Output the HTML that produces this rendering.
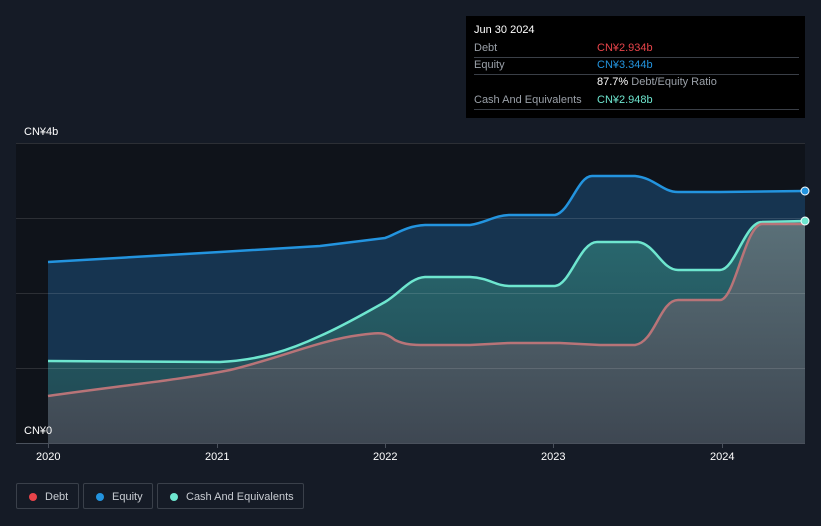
<!DOCTYPE html>
<html><head><meta charset="utf-8"><style>
body{margin:0;width:821px;height:526px;background:#151b26;font-family:"Liberation Sans","Noto Sans CJK SC",sans-serif;overflow:hidden;position:relative}
.tt{position:absolute;left:466px;top:16px;width:339px;height:102px;background:#000;color:#fff;font-size:11px}
.tt .r{position:absolute;left:8px;right:6px;border-bottom:1px solid #3a3f47;height:17px;line-height:17px}
.g{color:#9aa0a8}
.v{position:absolute;left:123px}
.lg{position:absolute;top:483px;height:26px;border:1px solid #3a404a;border-radius:2px;color:#c8ccd2;font-size:11px;line-height:26px;box-sizing:border-box}
.lg i{position:absolute;left:12px;top:9px;width:8px;height:8px;border-radius:50%}
.ax{position:absolute;color:#fff;font-size:11px}
</style></head><body>
<svg width="821" height="526" style="position:absolute;left:0;top:0">
<defs>
<linearGradient id="dg" x1="0" y1="0" x2="0" y2="1"><stop offset="0" stop-color="#5a7078"/><stop offset="1" stop-color="#3e4752"/></linearGradient>
<linearGradient id="cg" x1="0" y1="0" x2="0" y2="1"><stop offset="0" stop-color="#2a6a70"/><stop offset="1" stop-color="#1f4550"/></linearGradient>
</defs>
<rect x="16" y="143" width="789" height="300" fill="#0f131a"/>
<path d="M48,262 L220,252 L320,246 L385,238 C395,235 405,226 425,225 L470,225 C485,223 495,215 510,215 L555,215 C570,212 578,176 592,176 L635,176 C655,178 662,192 678,192 L720,192 L805,191 L805,443 L48,443Z" fill="#163450"/>
<path d="M48,361 L220,362 C260,360 290,350 320,336 C345,325 365,313 385,302 C400,293 410,278 425,277 L470,277 C490,278 495,286 510,286 L555,286 C570,285 580,242 597,242 L638,242 C655,244 662,270 678,270 L720,270 C735,270 745,222 762,222 L805,221 L805,443 L48,443Z" fill="url(#cg)"/>
<path d="M48,396 C110,387 180,380 230,370 C280,358 320,340 360,335 C380,332 385,332 395,340 C405,345 415,345 425,345 L470,345 L510,343 L560,343 L600,345 L635,345 C655,342 660,300 678,300 L720,300 C735,300 745,225 762,224 L805,224 L805,443 L48,443Z" fill="url(#dg)"/>
<g stroke="#ffffff" stroke-opacity="0.12" stroke-width="1"><line x1="16" y1="143.5" x2="805" y2="143.5"/><line x1="16" y1="218.5" x2="805" y2="218.5"/><line x1="16" y1="293.5" x2="805" y2="293.5"/><line x1="16" y1="368.5" x2="805" y2="368.5"/></g>
<line x1="16" y1="443.5" x2="805" y2="443.5" stroke="#4a515c"/>
<path d="M48,262 L220,252 L320,246 L385,238 C395,235 405,226 425,225 L470,225 C485,223 495,215 510,215 L555,215 C570,212 578,176 592,176 L635,176 C655,178 662,192 678,192 L720,192 L805,191" fill="none" stroke="#2394df" stroke-width="2.5"/>
<path d="M48,361 L220,362 C260,360 290,350 320,336 C345,325 365,313 385,302 C400,293 410,278 425,277 L470,277 C490,278 495,286 510,286 L555,286 C570,285 580,242 597,242 L638,242 C655,244 662,270 678,270 L720,270 C735,270 745,222 762,222 L805,221" fill="none" stroke="#6ee6cf" stroke-width="2.5"/>
<path d="M48,396 C110,387 180,380 230,370 C280,358 320,340 360,335 C380,332 385,332 395,340 C405,345 415,345 425,345 L470,345 L510,343 L560,343 L600,345 L635,345 C655,342 660,300 678,300 L720,300 C735,300 745,225 762,224 L805,224" fill="none" stroke="#b87478" stroke-width="2.5"/>
<circle cx="805" cy="191" r="4" fill="#2394df" stroke="#fff" stroke-width="1"/>
<circle cx="805" cy="221" r="4" fill="#6ee6cf" stroke="#fff" stroke-width="1"/>
<g stroke="#4a515c"><line x1="48.5" y1="443" x2="48.5" y2="448"/><line x1="217.5" y1="443" x2="217.5" y2="448"/><line x1="385.5" y1="443" x2="385.5" y2="448"/><line x1="553.5" y1="443" x2="553.5" y2="448"/><line x1="722.5" y1="443" x2="722.5" y2="448"/></g>
</svg>
<div class="ax" style="left:24px;top:126px">CN¥4b</div>
<div class="ax" style="left:24px;top:425px">CN¥0</div>
<div class="ax" style="left:36px;top:451px">2020</div>
<div class="ax" style="left:205px;top:451px">2021</div>
<div class="ax" style="left:373px;top:451px">2022</div>
<div class="ax" style="left:541px;top:451px">2023</div>
<div class="ax" style="left:710px;top:451px">2024</div>
<div class="tt">
<div style="position:absolute;left:8px;top:8px;font-size:11px">Jun 30 2024</div>
<div class="r" style="top:24px"><span class="g">Debt</span><span class="v" style="color:#e8444a">CN¥2.934b</span></div>
<div class="r" style="top:41px"><span class="g">Equity</span><span class="v" style="color:#2394df">CN¥3.344b</span></div>
<div class="r" style="top:58px;border:none"><span class="v"><b style="font-weight:normal;color:#fff">87.7%</b> <span class="g">Debt/Equity Ratio</span></span></div>
<div class="r" style="top:76px"><span class="g">Cash And Equivalents</span><span class="v" style="color:#6ee6cf">CN¥2.948b</span></div>
</div>
<div class="lg" style="left:16px;width:63px"><i style="background:#e8444a"></i><span style="position:absolute;left:28px">Debt</span></div>
<div class="lg" style="left:83px;width:70px"><i style="background:#2394df"></i><span style="position:absolute;left:28px">Equity</span></div>
<div class="lg" style="left:157px;width:147px"><i style="background:#6ee6cf"></i><span style="position:absolute;left:28px">Cash And Equivalents</span></div>
</body></html>
